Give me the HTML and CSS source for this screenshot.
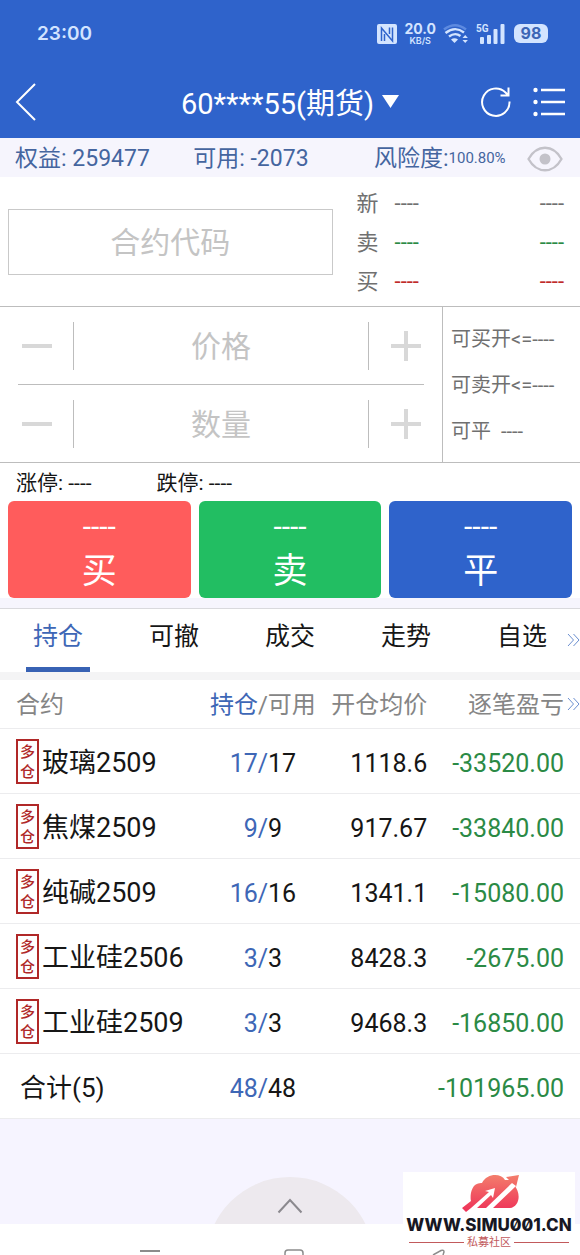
FILE: index.html
```html
<!DOCTYPE html>
<html lang="zh-CN">
<head>
<meta charset="utf-8">
<meta name="viewport" content="width=device-width, initial-scale=1">
<title>期货交易</title>
<link rel="stylesheet" href="styles.css">
</head>
<body>
<header class="top">
  <div class="status">
    <span class="clock">23:00</span>
    <div class="status-icons">
      <svg width="20" height="20" viewBox="0 0 20 20"><rect width="20" height="20" rx="2" fill="#d3e4ff"/><path d="M4.500 17V4l11 13V3.500M7.500 17V10M12.500 3.500V10" fill="none" stroke="#2f63cb" stroke-width="1.500"/></svg>
      <span class="net"><b>20.0</b><span>KB/S</span></span>
      <svg width="26" height="20" viewBox="0 0 26 20" fill="none" stroke="#d3e4ff" stroke-width="2.400"><path d="M1 5.500Q12 -3 23 5.500" stroke="#5d8ae0"/><path d="M2.500 9Q12 1.500 21 8.500M6 12.500Q12 8 17.500 12"/><path d="M8 15.500q3.500-2.500 7 0L11.500 19z" fill="#d3e4ff" stroke="none"/><path d="M19.500 14l2.700-3 2.700 3zM19.500 16l2.700 3 2.700-3z" fill="#d3e4ff" stroke="none"/></svg>
      <span class="signal"><span class="gen">5G</span><svg width="29" height="20" viewBox="0 0 29 20" fill="#d3e4ff"><rect x="4" y="13" width="4" height="7" rx="1"/><rect x="11" y="11" width="4" height="9" rx="1"/><rect x="17.500" y="5" width="4" height="15" rx="1"/><rect x="24.500" y="0" width="4" height="20" rx="1"/></svg></span>
      <span class="battery">98</span>
    </div>
  </div>
  <nav class="titlebar">
    <button class="icon-btn" aria-label="返回"><svg width="22" height="38" viewBox="0 0 22 38" fill="none" stroke="#fff" stroke-width="2"><path d="M20 1L2 19l18 18"/></svg></button>
    <button class="account"><span>60****55(期货)</span><svg width="17" height="13" viewBox="0 0 17 13" fill="#fff"><path d="M0 0h17L8.500 13z"/></svg></button>
    <div class="tools">
      <button class="icon-btn" aria-label="刷新"><svg width="30" height="32" viewBox="0 0 30 32" fill="none" stroke="#fff" stroke-width="2"><path d="M28.500 15.500A13.700 13.700 0 1 1 24.500 6.500l2.500 2.500M27.500 1.500V9.500H19.500"/></svg></button>
      <button class="icon-btn" aria-label="菜单"><svg width="32" height="30" viewBox="0 0 32 30" fill="none" stroke="#fff" stroke-width="2.300"><path d="M8 3h24M8 15h24M8 27h24"/><g fill="#fff" stroke="none"><circle cx="2.500" cy="3" r="2.200"/><circle cx="2.500" cy="15" r="2.200"/><circle cx="2.500" cy="27" r="2.200"/></g></svg></button>
    </div>
  </nav>
</header>

<section class="funds">
  <span class="equity">权益: 259477</span>
  <span class="available">可用: -2073</span>
  <span class="risk">风险度:<small>100.80%</small></span>
  <button class="icon-btn" aria-label="隐藏金额"><svg width="36" height="26" viewBox="0 0 36 26" fill="none" stroke="#c3c2c9" stroke-width="2.300"><path d="M1.500 13C10-2 26-2 34.500 13 26 28 10 28 1.500 13z"/><circle cx="18" cy="13" r="5.500" fill="#c3c2c9" stroke="none"/></svg></button>
</section>

<section class="quote">
  <input class="code" type="text" placeholder="合约代码" aria-label="合约代码">
  <div class="prices">
    <div class="price"><span class="label">新</span><span>----</span><span class="vol">----</span></div>
    <div class="price green"><span class="label">卖</span><span>----</span><span class="vol">----</span></div>
    <div class="price red"><span class="label">买</span><span>----</span><span class="vol">----</span></div>
  </div>
</section>

<section class="order">
  <div class="steppers">
    <div class="stepper">
      <button class="step minus" aria-label="减少价格"><svg width="30" height="30" viewBox="0 0 30 30"><path d="M0 15h30" stroke="#d8d8d8" stroke-width="4"/></svg></button>
      <input type="text" placeholder="价格" aria-label="价格">
      <button class="step plus" aria-label="增加价格"><svg width="30" height="30" viewBox="0 0 30 30"><path d="M0 15h30M15 0v30" stroke="#d8d8d8" stroke-width="4"/></svg></button>
    </div>
    <div class="rule"></div>
    <div class="stepper">
      <button class="step minus" aria-label="减少数量"><svg width="30" height="30" viewBox="0 0 30 30"><path d="M0 15h30" stroke="#d8d8d8" stroke-width="4"/></svg></button>
      <input type="text" placeholder="数量" aria-label="数量">
      <button class="step plus" aria-label="增加数量"><svg width="30" height="30" viewBox="0 0 30 30"><path d="M0 15h30M15 0v30" stroke="#d8d8d8" stroke-width="4"/></svg></button>
    </div>
  </div>
  <div class="capacity">
    <span>可买开&lt;=----</span>
    <span>可卖开&lt;=----</span>
    <span>可平&nbsp; ----</span>
  </div>
</section>

<section class="limits"><span>涨停: ----</span><span>跌停: ----</span></section>

<section class="actions">
  <button class="action buy"><span class="quoted">----</span><span>买</span></button>
  <button class="action sell"><span class="quoted">----</span><span>卖</span></button>
  <button class="action close"><span class="quoted">----</span><span>平</span></button>
</section>

<nav class="tabs">
  <button class="tab active">持仓</button>
  <button class="tab">可撤</button>
  <button class="tab">成交</button>
  <button class="tab">走势</button>
  <button class="tab">自选</button>
  <svg class="more" width="13" height="14" viewBox="0 0 13 14" fill="none" stroke="#6b8fd0"><path d="M1 1l5.500 6L1 13M6.500 1L12 7l-5.500 6"/></svg>
</nav>

<main class="positions">
  <table>
    <thead>
      <tr><th class="name">合约</th><th class="qty"><span class="held">持仓</span>/可用</th><th class="avg">开仓均价</th><th class="pnl">逐笔盈亏<svg class="more" width="13" height="14" viewBox="0 0 13 14" fill="none" stroke="#6b8fd0"><path d="M1 1l5.500 6L1 13M6.500 1L12 7l-5.500 6"/></svg></th></tr>
    </thead>
    <tbody>
      <tr><td class="name"><div class="contract"><span class="side">多仓</span><span class="title">玻璃2509</span></div></td><td class="qty"><span class="held">17/</span>17</td><td class="avg">1118.6</td><td class="pnl">-33520.00</td></tr>
      <tr><td class="name"><div class="contract"><span class="side">多仓</span><span class="title">焦煤2509</span></div></td><td class="qty"><span class="held">9/</span>9</td><td class="avg">917.67</td><td class="pnl">-33840.00</td></tr>
      <tr><td class="name"><div class="contract"><span class="side">多仓</span><span class="title">纯碱2509</span></div></td><td class="qty"><span class="held">16/</span>16</td><td class="avg">1341.1</td><td class="pnl">-15080.00</td></tr>
      <tr><td class="name"><div class="contract"><span class="side">多仓</span><span class="title">工业硅2506</span></div></td><td class="qty"><span class="held">3/</span>3</td><td class="avg">8428.3</td><td class="pnl">-2675.00</td></tr>
      <tr><td class="name"><div class="contract"><span class="side">多仓</span><span class="title">工业硅2509</span></div></td><td class="qty"><span class="held">3/</span>3</td><td class="avg">9468.3</td><td class="pnl">-16850.00</td></tr>
    </tbody>
    <tfoot>
      <tr><td class="name total">合计(5)</td><td class="qty"><span class="held">48/</span>48</td><td></td><td class="pnl">-101965.00</td></tr>
    </tfoot>
  </table>
</main>

<div class="drawer">
  <button class="icon-btn" aria-label="展开"><svg width="152" height="47" viewBox="0 0 152 47"><circle cx="76" cy="84" r="84" fill="#ede9ee"/><path d="M64.500 35.500L76 23l11.500 12.500" fill="none" stroke="#8b898e" stroke-width="2"/></svg></button>
</div>

<footer class="sysnav">
  <svg width="20" height="6" viewBox="0 0 20 6"><path d="M0 2h20" stroke="#8c8c8c" stroke-width="2"/></svg>
  <svg width="20" height="6" viewBox="0 0 20 6" fill="none" stroke="#8c8c8c" stroke-width="1.500"><path d="M1 6V4q0-3 3-3h12q3 0 3 3v2"/></svg>
  <svg width="20" height="6" viewBox="0 0 20 6" fill="none" stroke="#8c8c8c" stroke-width="1.500"><path d="M5 6l8-4.500q3-1 3 1.500l-1 3"/></svg>
</footer>

<aside class="brand">
  <svg width="60" height="39" viewBox="0 0 60 39">
    <defs><linearGradient id="cloud" x1="0" y1="0" x2="0" y2="1"><stop offset="0" stop-color="#f37d6c"/><stop offset="1" stop-color="#ee3158"/></linearGradient></defs>
    <path d="M9 27C8 24 8 8 20 9 25-1 39-1 43 6L47 6 44 3 57 1 54 13 52 11C60 20 57 33 48 34H9L4 38 0 34z" fill="url(#cloud)"/>
    <path d="M9 34L27 18 23 17 33 14 31 24 29 21 15 34zM24 34L50 9 54 12 31 34z" fill="#fff"/>
  </svg>
  <strong>WWW.SIMU001.CN</strong>
  <span class="tagline">私募社区</span>
</aside>
</body>
</html>
```
FILE: styles.css
```css
* { box-sizing: border-box; }

body {
  margin: 0;
  min-height: 100vh;
  display: flex;
  flex-direction: column;
  position: relative;
  background: #fff;
  color: #161616;
  font-family: Roboto, "Noto Sans CJK SC", sans-serif;
  font-size: 25px;
  line-height: 1;
}

button, input {
  font: inherit;
  color: inherit;
  margin: 0;
  padding: 0;
  border: 0;
  background: none;
}

svg { display: block; flex: none; }
.icon-btn { display: block; flex: none; }

.top { background: #2f63cb; color: #fff; }

.status {
  height: 67px;
  padding: 0 32px 0 37px;
  display: flex;
  align-items: center;
  justify-content: space-between;
  color: #d3e4ff;
}
.clock { font-family: Inter, sans-serif; font-size: 19px; font-weight: 600; }
.status-icons { display: flex; align-items: center; gap: 7px; }
.net { display: flex; flex-direction: column; align-items: center; font-family: Inter, sans-serif; font-size: 9px; font-weight: 600; }
.net b { font-size: 14px; line-height: 14px; font-weight: 700; }
.net span { line-height: 9px; }
.signal { position: relative; }
.gen { position: absolute; left: 0; top: 0; font-size: 10px; font-weight: 700; }
.battery {
  width: 34px;
  margin-left: 2px;
  border-radius: 6px;
  background: #d3e4ff;
  color: #3c65b5;
  font-family: Inter, sans-serif;
  font-size: 16px;
  line-height: 19px;
  font-weight: 700;
  text-align: center;
}

.titlebar {
  height: 71px;
  padding: 0 15px 2px;
  display: grid;
  grid-template-columns: 88px 1fr 88px;
  align-items: center;
}
.account { display: flex; align-items: center; justify-content: center; gap: 8px; font-size: 29px; white-space: nowrap; }
.account span { padding-top: 5px; }
.tools { display: flex; align-items: center; justify-content: flex-end; gap: 22px; }

.funds {
  height: 39px;
  padding: 2px 17px 0 15px;
  display: flex;
  align-items: center;
  justify-content: space-between;
  background: #f6f5fd;
  color: #45659f;
  font-size: 23px;
  white-space: nowrap;
}
.available { margin-left: 22px; }
.risk { display: flex; align-items: center; margin-left: 44px; }
.risk small { font-size: 15px; }

.quote {
  height: 129px;
  padding: 0 16px 0 8px;
  display: flex;
  align-items: center;
  gap: 24px;
}
.code { flex: 14; min-width: 0; height: 66px; padding-top: 2px; border: 1px solid #c9c9c9; font-size: 30px; text-align: center; }
input::placeholder { color: #c4c4c4; opacity: 1; }
.prices { flex: 9; display: grid; gap: 15px; padding-top: 2px; color: #707070; font-size: 22px; line-height: 24px; }
.price { display: flex; }
.price .label { width: 38px; color: #707070; }
.vol { margin-left: auto; }
.green { color: #2b8a45; }
.red { color: #c02a2a; }

.order { display: flex; border-top: 1px solid #bdbdbd; border-bottom: 1px solid #bdbdbd; }
.steppers { flex: 1; min-width: 0; border-right: 1px solid #bdbdbd; }
.stepper { height: 77px; display: grid; grid-template-columns: 74px 1fr 74px; align-items: center; }
.stepper input { width: 100%; min-width: 0; padding-top: 2px; font-size: 30px; text-align: center; }
.step { height: 48px; display: flex; align-items: center; justify-content: center; }
.minus { border-right: 1px solid #bdbdbd; }
.plus { border-left: 1px solid #bdbdbd; }
.rule { height: 1px; margin: 0 18px; background: #bdbdbd; }
.capacity {
  width: 137px;
  padding-left: 8px;
  display: flex;
  flex-direction: column;
  justify-content: center;
  gap: 22px;
  color: #707070;
  font-size: 20px;
  line-height: 24px;
  white-space: nowrap;
}

.limits { height: 38px; padding: 2px 16px 0; display: flex; align-items: center; gap: 65px; font-size: 21px; }

.actions {
  padding: 0 8px 10px;
  display: grid;
  grid-template-columns: repeat(3, 1fr);
  gap: 8px;
  background: linear-gradient(#fff 97px, #f6f5fd 97px);
  border-bottom: 1px solid #d9d9dd;
}
.action { height: 97px; padding-top: 7px; border-radius: 6px; display: flex; flex-direction: column; align-items: center; justify-content: center; color: #fff; font-size: 35px; line-height: 52px; }
.quoted { font-size: 30px; line-height: 38px; }
.buy { background: #ff5c5c; }
.sell { background: #22be62; }
.close { background: #2f63cb; }

.tabs { position: relative; height: 71px; display: grid; grid-template-columns: repeat(5, 1fr); border-bottom: 8px solid #f4f4f5; }
.tab { position: relative; padding-bottom: 9px; }
.active { color: #3e67b6; }
.active::after { content: ""; position: absolute; left: 50%; bottom: 0; width: 64px; height: 5px; margin-left: -32px; background: #3862b4; }
.more { position: absolute; right: 0; top: 24px; }

table { width: 100%; border-collapse: collapse; table-layout: fixed; }
th, td { padding: 0; font-weight: 400; border-bottom: 1px solid #ececee; white-space: nowrap; }
th { position: relative; height: 48px; padding-top: 3px; color: #858585; font-size: 24px; }
td { height: 65px; padding-top: 5px; }
th .more { top: 17px; }
.name { width: 35%; padding-left: 16px; text-align: left; }
.qty { width: 21%; padding-right: 2px; text-align: center; }
.avg { width: 18%; padding-right: 2px; text-align: right; }
.pnl { width: 26%; padding-right: 16px; text-align: right; }
td.name { padding-top: 0; font-size: 27px; }
td.total { padding-top: 5px; padding-left: 20px; font-size: 26px; }
.held { color: #3e67b6; }
td.pnl { color: #2b8a45; }
.contract { display: flex; align-items: center; gap: 3px; padding-top: 1px; }
.title { padding-top: 5px; }
.side {
  width: 23px;
  padding: 1px 2px 0;
  border: 2px solid #b02828;
  color: #b02828;
  font-size: 15px;
  line-height: 20px;
  font-weight: 500;
  white-space: normal;
  word-break: break-all;
  text-align: center;
}

.drawer { flex: 1; display: flex; align-items: flex-end; justify-content: center; background: #f6f4ff; }

.sysnav { position: relative; z-index: 1; height: 31px; padding: 0 132px 0 140px; display: flex; align-items: flex-end; justify-content: space-between; }

.brand {
  position: absolute;
  right: 5px;
  bottom: 0;
  width: 172px;
  height: 83px;
  padding-top: 2px;
  display: flex;
  flex-direction: column;
  align-items: center;
  background: #fff;
  color: #171723;
}
.brand svg { margin-left: 6px; }
.brand strong { font-family: Inter, sans-serif; font-size: 17px; line-height: 24px; font-weight: 800; font-feature-settings: "zero"; }
.tagline { align-self: stretch; margin: 0 6px; display: flex; align-items: center; gap: 3px; color: #c25a5c; font-size: 11px; line-height: 11px; }
.tagline::before, .tagline::after { content: ""; flex: 1; height: 1px; background: #c25a5c; }
```
